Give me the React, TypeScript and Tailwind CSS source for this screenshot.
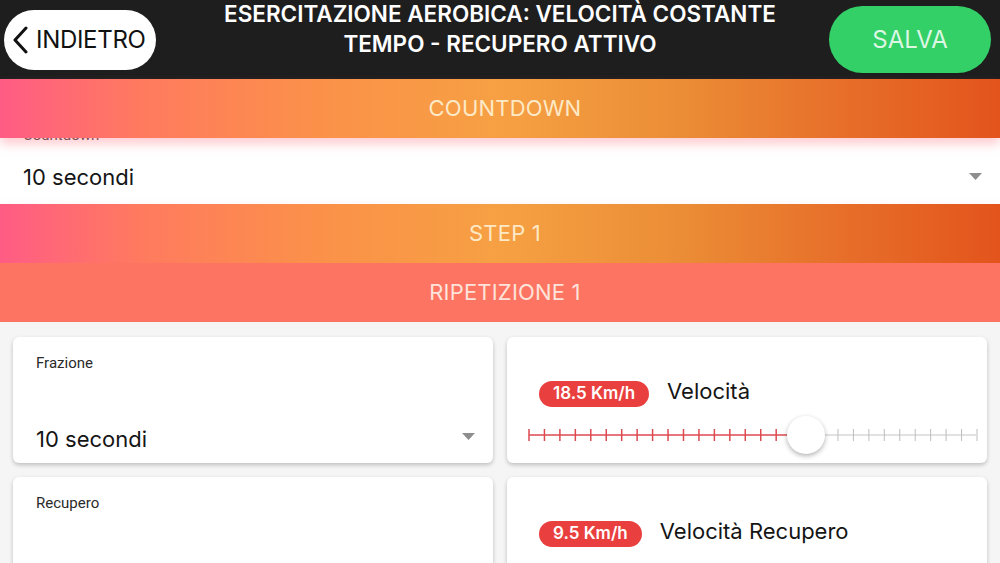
const TICKS = 30;

function Band({ label, solid }: { label: string; solid?: boolean }) {
  return (
    <div
      className={
        "relative z-10 h-[59px] flex items-center justify-center pl-[10px] text-[22px] tracking-[0.2px] " +
        (solid
          ? "bg-[#fd7462] text-[#fde3da]"
          : "bg-[linear-gradient(to_right,#ff5c85_0%,#ff7a5f_14%,#fb9149_32%,#f6a043_50%,#eb8d36_68%,#e76f2a_84%,#e3541c_100%)] text-[#fde9c6] shadow-[0_6px_10px_rgba(255,110,120,0.35)]")
      }
    >
      {label}
    </div>
  );
}

function Caret({ className }: { className: string }) {
  return (
    <svg className={className} width="13" height="7" viewBox="0 0 13 7">
      <path d="M0 0h13L6.5 7z" fill="#8e8e8e" />
    </svg>
  );
}

function SelectCard({ label, value }: { label: string; value?: string }) {
  return (
    <div className="relative h-[126px] bg-white rounded-[6px] shadow-[0_2px_4px_rgba(0,0,0,0.22)] px-[23px] pt-[15px] font-['Roboto',sans-serif]">
      <div className="text-[15px] text-[#2a2a2a]">{label}</div>
      {value && (
        <>
          <div className="absolute left-[23px] top-[86px] text-[22px] text-[#151515] font-['Inter',sans-serif]">{value}</div>
          <Caret className="absolute right-[18px] top-[96px]" />
        </>
      )}
    </div>
  );
}

function SpeedCard({ badge, title, value }: { badge: string; title: string; value?: number }) {
  const w = 448;
  const step = w / (TICKS - 1);
  const thumbX = value !== undefined ? value * w : 0;
  return (
    <div className="h-[126px] bg-white rounded-[6px] shadow-[0_2px_4px_rgba(0,0,0,0.22)] pt-[42px] pl-[32px] font-['Inter',sans-serif]">
      <div className="flex items-center gap-[18px]">
        <span className="h-[26px] px-[14px] rounded-full bg-[#e9403f] text-white text-[17px] font-semibold flex items-center">
          {badge}
        </span>
        <span className="text-[22px] text-[#151515] -mt-[4px]">{title}</span>
      </div>
      {value !== undefined && (
        <div className="relative ml-[-11px] mt-[7px] w-[448px] h-[40px]">
          <svg width={w + 2} height="40" className="absolute left-0 top-0">
            <line x1="1" y1="20" x2={thumbX} y2="20" stroke="#dc4a50" strokeWidth="1.5" />
            <line x1={thumbX} y1="20" x2={w} y2="20" stroke="#c4c4c4" strokeWidth="1" />
            {Array.from({ length: TICKS }).map((_, i) => {
              const x = 1 + i * step;
              const red = x < thumbX;
              return (
                <line
                  key={i}
                  x1={x}
                  y1="14"
                  x2={x}
                  y2="26"
                  stroke={red ? "#dc4a50" : "#bdbdbd"}
                  strokeWidth={red ? 1.5 : 1}
                />
              );
            })}
          </svg>
          <div
            className="absolute top-[1px] w-[38px] h-[38px] rounded-full bg-white shadow-[0_2px_5px_rgba(0,0,0,0.3)]"
            style={{ left: thumbX - 19 }}
          />
        </div>
      )}
    </div>
  );
}

export default function App() {
  return (
    <div className="w-[1000px] h-[563px] overflow-hidden bg-[#f5f5f5] font-['Inter',sans-serif]">
      <header className="h-[79px] bg-[#1e1e1f] grid grid-cols-[1fr_auto_1fr] items-center px-1">
        <button className="justify-self-start w-[152px] h-[60px] rounded-full bg-white flex items-center pl-[6px] gap-[6px] text-[24px] text-[#111] tracking-[-0.3px]">
          <svg width="20" height="28" viewBox="0 0 20 28">
            <path d="M16 2L5 14l11 12" fill="none" stroke="#111" strokeWidth="3" strokeLinecap="round" strokeLinejoin="round" />
          </svg>
          INDIETRO
        </button>
        <h1 className="text-center text-white text-[22.5px] leading-[30px] font-semibold -mt-[22px]">
          ESERCITAZIONE AEROBICA: VELOCITÀ COSTANTE
          <br />
          TEMPO - RECUPERO ATTIVO
        </h1>
        <button className="justify-self-end mr-[5px] w-[162px] h-[67px] rounded-full bg-[#33cf67] text-[#dcf7e3] text-[24px]">
          SALVA
        </button>
      </header>

      <Band label="COUNTDOWN" />
      <div className="relative h-[66px] bg-white shadow-[0_2px_4px_rgba(0,0,0,0.15)] px-[23px] font-['Roboto',sans-serif]">
        <div className="absolute left-[23px] -top-[14px] text-[15px] text-[#444]">Countdown</div>
        <div className="absolute left-[23px] top-[23px] text-[22px] text-[#151515] font-['Inter',sans-serif]">10 secondi</div>
        <Caret className="absolute right-[18px] top-[35px]" />
      </div>
      <Band label="STEP 1" />
      <Band label="RIPETIZIONE 1" solid />

      <div className="grid grid-cols-2 gap-x-[14px] gap-y-[14px] px-[13px] pt-[15px]">
        <SelectCard label="Frazione" value="10 secondi" />
        <SpeedCard badge="18.5 Km/h" title="Velocità" value={0.62} />
        <SelectCard label="Recupero" />
        <SpeedCard badge="9.5 Km/h" title="Velocità Recupero" />
      </div>
    </div>
  );
}
